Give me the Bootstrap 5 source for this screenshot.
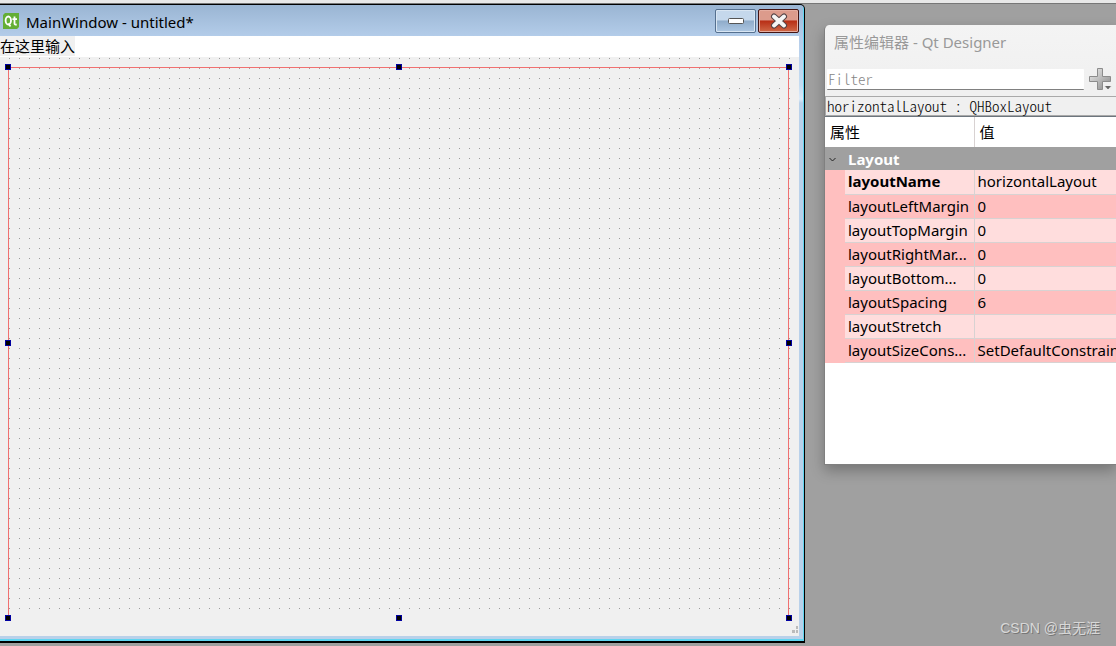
<!DOCTYPE html>
<html lang="zh-CN">
<head>
<meta charset="utf-8">
<meta name="viewport" content="width=device-width, initial-scale=1">
<title>MainWindow - untitled*</title>
<link href="https://cdn.jsdelivr.net/npm/bootstrap@5.3.0/dist/css/bootstrap.min.css" rel="stylesheet">
<style>
body{background:#a0a0a0;color:#000;font:15px/24px "Noto Sans","Noto Sans CJK SC",sans-serif;}
.topstrip{height:4px;background:#e8e8e8;border-bottom:1px solid #777}
.workspace{min-height:0}
.form-window{margin-bottom:3px;background:linear-gradient(#9cb9d8,#b5cdea 32px,#c4dcf2 80px,#dcebfa 94px,#b9d1ea 98px);border:solid #000;border-width:1px 1px 2px 0;border-radius:0 5px 0 0;box-shadow:inset -1px -2px #60d5f0;padding:0 5px 5px 0}
.title-bar{height:31px;padding-left:3px;background:linear-gradient(#9ab5d3,#b3cce9)}
.title-bar h1{font-size:15px;line-height:24px;margin:5px 0 0 7px}
.win-btn{width:41px;height:24px;border:1px solid #55708f;border-radius:2px;background:linear-gradient(#c5d8ec 45%,#8facca 50%,#adc7e3);box-shadow:inset 0 0 0 1px #d9e6f3}
.win-btn.close-btn{border-color:#431413;background:linear-gradient(#dc9b8c 45%,#b82e16 50%,#d06a48);box-shadow:inset 0 0 0 1px #e5ada0}
.win-btns{gap:2px}
.menu-strip{height:21px;background:#fff}
.menu-strip a{display:inline-block;background:#f0f0f0;color:#000;line-height:20px;height:20px}
.canvas{background-color:#f0f0f0;padding:10px 10px 18px 8px;position:relative}
.canvas::before{content:"";position:absolute;inset:0 9px 20px 9px;background:conic-gradient(from 0deg at 1px 1px,transparent 75%,#9c9c9c 0) 0 1px/10px 10px}
.layout-box{position:relative;z-index:1;background:linear-gradient(#f07070,#f07070) top/100% 1px no-repeat,linear-gradient(#f07070,#f07070) left/1px 100% no-repeat,linear-gradient(#f07070,#f07070) right/1px 100% no-repeat}
.handle{position:absolute;width:6px;height:6px;background:#000;border:1px solid #0000a0;transform:translate(-50%,-50%)}
.size-grip{position:absolute;right:1px;bottom:2px}
.editor{width:292px;margin:21px 0 0 19px}
.dock{background:linear-gradient(#f4f4f4,#f0f0f0 60px);border:1px solid #808080;border-width:0 0 1px 1px;border-radius:5px 0 0 0;box-shadow:0 6px 14px #0004;height:440px}
.dock h2{font-size:15px;line-height:24px;color:#999;padding:5px 0 0 9px;margin:0 0 11px}
.fixed-text{font-family:"Noto Sans CJK SC",sans-serif;font-size:15px;font-weight:300;font-feature-settings:"hwid"}
.filter-box{height:21px;border:0;border-bottom:1px solid #808080;border-radius:1px;background:#fff;padding:0 1px;margin-left:2px;min-width:0}
.filter-box::placeholder{color:#858585;opacity:1}
.add-btn{width:32px;height:28px}
.object-label{height:20px;line-height:18px;border:1px solid #a9a9a9;border-right:0;padding-left:1px;margin-top:3px}
.props{table-layout:fixed;border-collapse:collapse}
.props th,.props td{padding:0 0 0 3px;height:24px;line-height:23px;white-space:nowrap;overflow:hidden;border-bottom:1px solid #d8d2d2}
.props .name-col{width:129px}
.props .indent-col{width:20px}
.props thead th{height:30px;font-weight:400;padding-left:5px;border-bottom:0}
.props th+th,.props td:last-child{border-left:1px solid #d8d2d2}
.props .group-row th{background:#a0a0a0;color:#fff;font-weight:700;height:23px;line-height:22px;border:0}
.props .group-row button{width:20px;padding:0 4px 0 0;line-height:0}
.props tbody tr{background:#ffdddd}
.props tbody tr:nth-child(odd),.props .gutter{background:#ffbfbf}
.props .gutter{border-bottom-color:#ffbfbf}
.props tbody th{font-weight:400}
.props tbody th.changed{font-weight:700}
.props tbody tr:not(.group-row) th{border-left:0}
.watermark{font:14px/20px "Liberation Sans","Noto Sans CJK SC",sans-serif;color:#d8d8d8;text-shadow:1px 1px #777;padding:0 16px 8px 0}
</style>
</head>
<body class="d-flex flex-column vh-100 overflow-hidden">
<div class="topstrip flex-shrink-0"></div>
<div class="workspace d-flex flex-grow-1">
  <main class="form-window d-flex flex-column flex-grow-1">
    <header class="title-bar d-flex align-items-start flex-shrink-0">
      <svg class="mt-2" width="16" height="17" viewBox="0 0 16 17" aria-hidden="true"><path fill="#64ae35" d="M2 0h14v14l-2 2H0V2z"/><g fill="none" stroke="#fff" stroke-width="1.8"><ellipse cx="5.3" cy="7.5" rx="2.7" ry="4"/><path d="M5.500 10.500l2 3M11.500 3.500v7q0 1.500 2.200 1M9.400 6.200h4.600"/></g></svg>
      <h1 class="fw-normal flex-grow-1">MainWindow - untitled*</h1>
      <div class="win-btns d-flex mt-1 flex-shrink-0">
        <button class="win-btn p-0 d-flex align-items-center justify-content-center" type="button" aria-label="Minimize"><svg width="18" height="8"><rect x="1.5" y="1.5" width="15" height="5" rx="1" fill="#fff" stroke="#555"/></svg></button>
        <button class="win-btn close-btn p-0 d-flex align-items-center justify-content-center" type="button" aria-label="Close"><svg width="20" height="18" viewBox="0 0 20 18"><path fill="none" stroke="#554446" stroke-linecap="round" stroke-width="6" d="M5 4.500l10 9M15 4.500l-10 9"/><path fill="none" stroke="#f5f5f5" stroke-linecap="round" stroke-width="4" d="M5 4.500l10 9M15 4.500l-10 9"/></svg></button>
      </div>
    </header>
    <nav class="menu-strip flex-shrink-0 d-flex"><a href="#" class="text-decoration-none">在这里输入</a></nav>
    <section class="canvas d-flex flex-grow-1">
      <div class="layout-box flex-grow-1">
        <span class="handle start-0 top-0"></span><span class="handle start-50 top-0"></span><span class="handle start-100 top-0"></span>
        <span class="handle start-0 top-50"></span><span class="handle start-100 top-50"></span>
        <span class="handle start-0 top-100"></span><span class="handle start-50 top-100"></span><span class="handle start-100 top-100"></span>
      </div>
      <svg class="size-grip" width="6" height="8" fill="#bbb" aria-hidden="true"><path d="M4 0h2v3H4zM0 4h3v3H0zM4 4h2v3H4z"/></svg>
    </section>
  </main>
  <aside class="editor d-flex flex-column justify-content-between flex-shrink-0">
    <section class="dock d-flex flex-column">
      <h2 class="fw-normal">属性编辑器 - Qt Designer</h2>
      <div class="d-flex align-items-center">
        <input class="filter-box fixed-text flex-grow-1" type="text" placeholder="Filter" aria-label="Filter">
        <button class="add-btn border-0 bg-transparent p-0" type="button" aria-label="Add"><svg class="d-block ms-1" width="26" height="26" viewBox="0 0 26 26"><defs><linearGradient id="metal" x2="1" y2="1"><stop stop-color="#eee"/><stop offset="1" stop-color="#888"/></linearGradient></defs><path fill="url(#metal)" stroke="#8c8c8c" d="M9.500 2.500h5v8h8v5h-8v8h-5v-8h-8v-5h8z"/><path fill="#666" stroke="#f0f0f0" d="M16 19.500h8l-4 4.500z"/></svg></button>
      </div>
      <div class="object-label fixed-text text-nowrap">horizontalLayout : QHBoxLayout</div>
      <div class="bg-white border-top border-secondary flex-grow-1">
      <table class="props w-100">
        <colgroup><col class="indent-col"><col class="name-col"><col></colgroup>
        <thead><tr><th colspan="2" scope="col">属性</th><th scope="col">值</th></tr></thead>
        <tbody>
          <tr class="group-row"><th class="p-0"><button type="button" class="border-0 bg-transparent" aria-label="Collapse"><svg width="10" height="8"><path d="M1.500 2l3 3 3-3" fill="none" stroke="#222"/></svg></button></th><th colspan="2" scope="rowgroup">Layout</th></tr>
          <tr><td class="gutter"></td><th class="changed" scope="row">layoutName</th><td>horizontalLayout</td></tr>
          <tr><td class="gutter"></td><th scope="row">layoutLeftMargin</th><td>0</td></tr>
          <tr><td class="gutter"></td><th scope="row">layoutTopMargin</th><td>0</td></tr>
          <tr><td class="gutter"></td><th scope="row">layoutRightMar...</th><td>0</td></tr>
          <tr><td class="gutter"></td><th scope="row">layoutBottom...</th><td>0</td></tr>
          <tr><td class="gutter"></td><th scope="row">layoutSpacing</th><td>6</td></tr>
          <tr><td class="gutter"></td><th scope="row">layoutStretch</th><td></td></tr>
          <tr><td class="gutter"></td><th scope="row">layoutSizeCons...</th><td>SetDefaultConstraint</td></tr>
        </tbody>
      </table>
      </div>
    </section>
    <div class="watermark text-end">CSDN @虫无涯</div>
  </aside>
</div>
<script src="https://cdn.jsdelivr.net/npm/bootstrap@5.3.0/dist/js/bootstrap.bundle.min.js"></script>
</body>
</html>
